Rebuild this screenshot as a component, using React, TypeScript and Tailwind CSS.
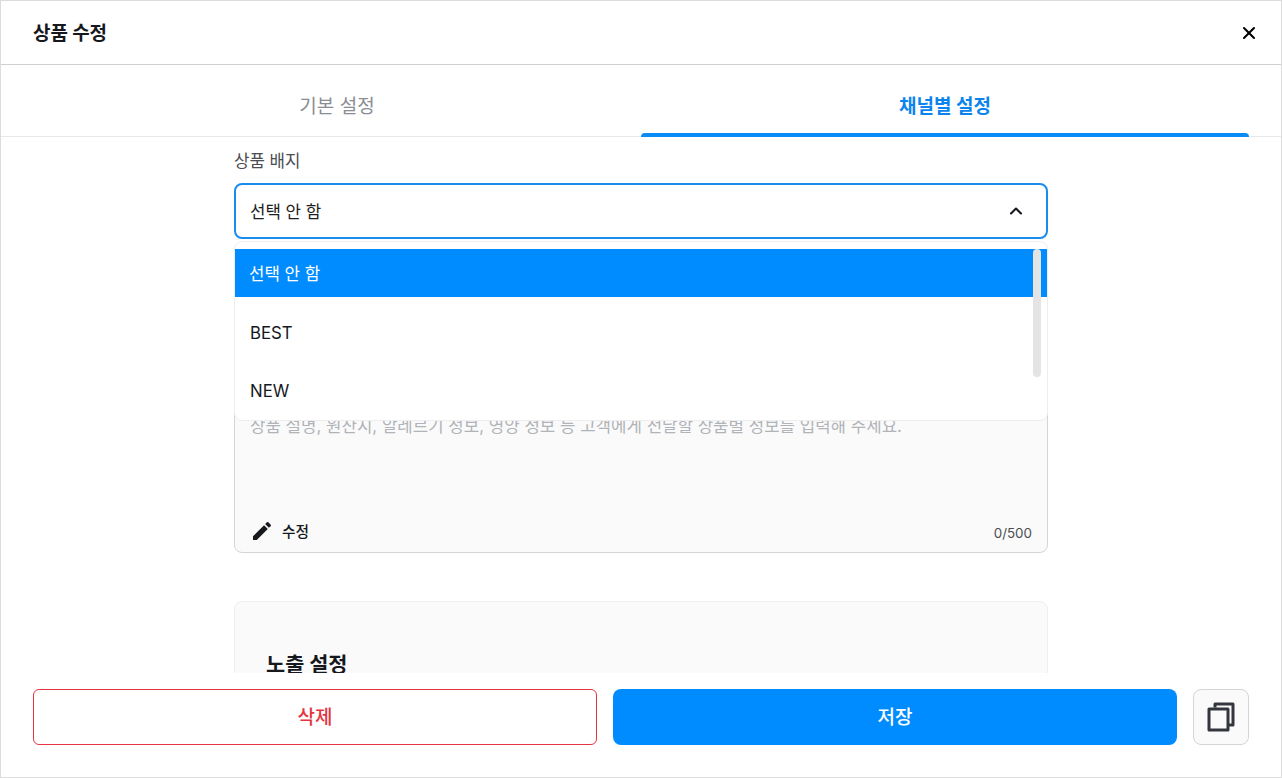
import React from 'react';
import { X, ChevronUp } from 'lucide-react';

const font = "font-['Inter','Noto_Sans_CJK_KR',sans-serif]";

const App = () => {
  return (
    <div className={`w-[1282px] h-[778px] flex flex-col bg-white border border-[#dcdcdc] overflow-hidden ${font}`}>
      {/* header */}
      <div className="h-[64px] shrink-0 flex items-center justify-between pl-[32px] pr-[22px] border-b border-[#cfcfcf]">
        <h1 className="pt-[3px] text-[19px] font-bold text-[#16181d] tracking-[-0.1px]">상품 수정</h1>
        <X size={20} strokeWidth={2.5} className="text-black" />
      </div>

      {/* tabs */}
      <div className="h-[72px] shrink-0 flex pr-[32px] border-b border-[#e8e8e8]">
        <div className="flex-1 flex items-center justify-center pl-[32px] pt-[14px] text-[19px] text-[#8a8d93]">기본 설정</div>
        <div className="w-[608px] relative flex items-center justify-center pt-[14px] text-[19px] font-bold text-[#0b84ee]">
          채널별 설정
          <div className="absolute left-0 right-0 bottom-[-1px] h-[4px] bg-[#0b8bf5] rounded-t-[4px]" />
        </div>
      </div>

      {/* scrolling body */}
      <div className="flex-1 min-h-0 overflow-hidden">
        <div className="w-[814px] ml-[233px] pt-[14px]">
          <label className="block text-[16.8px] leading-[20px] text-[#4a4d52]">상품 배지</label>
          <div className="relative mt-[12px]">
            <div className="h-[56px] flex items-center justify-between pl-[14px] pr-[20px] border-2 border-[#1a8cee] rounded-[8px] bg-white">
              <span className="pt-[3px] text-[16.8px] text-[#1c1e22]">선택 안 함</span>
              <ChevronUp size={20} strokeWidth={2.5} className="text-[#16181d]" />
            </div>
            <div className="absolute z-10 left-0 right-0 top-[58px] h-[180px] pt-[7px] bg-white border border-[#eeeeee] rounded-[8px] overflow-hidden">
              <div className="h-[48px] -mx-px flex items-center pl-[15px] pt-[3px] bg-[#008cff] text-[16.8px] text-white">선택 안 함</div>
              <div className="h-[48px] mt-[11px] flex items-center pl-[15px] pt-[3px] text-[16.8px] text-[#16181d]">BEST</div>
              <div className="h-[48px] mt-[10px] flex items-center pl-[15px] pt-[3px] text-[16.8px] text-[#16181d]">NEW</div>
              <div className="absolute top-[7px] right-[6px] w-[8px] h-[128px] rounded-full bg-[#e4e4e4]" />
            </div>
          </div>

          <div className="mt-[158px] h-[156px] flex flex-col justify-between px-[15px] pt-[18px] pb-[9px] border border-[#d5d5d5] rounded-[8px] bg-[#fafafa]">
            <p className="text-[16.8px] leading-[20px] text-[#b0b3b8]">
              상품 설명, 원산지, 알레르기 정보, 영양 정보 등 고객에게 전달할 상품별 정보를 입력해 주세요.
            </p>
            <div className="flex items-end justify-between">
              <div className="flex items-center gap-[8px]">
                <svg width="24" height="24" viewBox="0 0 24 24" className="text-[#16181d]">
                  <path fill="currentColor" d="M3 17.25V21h3.75L17.81 9.94l-3.75-3.75L3 17.25zM20.71 7.04a1 1 0 0 0 0-1.41l-2.34-2.34a1 1 0 0 0-1.41 0l-1.83 1.83 3.75 3.75 1.83-1.83z" />
                </svg>
                <span className="pt-[2px] text-[14.7px] font-medium text-[#16181d]">수정</span>
              </div>
              <span className="text-[13.4px] text-[#4a4d52]">0/500</span>
            </div>
          </div>

          <div className="mt-[48px] px-[31px] pt-[48px] pb-[40px] border border-[#eeeeee] rounded-[8px] bg-[#fafafa]">
            <h2 className="text-[20.8px] leading-[30px] font-bold text-[#16181d]">노출 설정</h2>
          </div>
        </div>
      </div>

      {/* footer */}
      <div className="h-[104px] shrink-0 flex gap-[16px] px-[32px] pt-[16px] bg-white">
        <button className="w-[564px] h-[56px] pt-[3px] rounded-[6px] border border-[#e5343f] text-[19px] font-medium text-[#e5343f] bg-white">삭제</button>
        <button className="w-[564px] h-[56px] pt-[3px] rounded-[8px] bg-[#008cff] text-[19px] font-medium text-white">저장</button>
        <button className="w-[56px] h-[56px] flex items-center justify-center rounded-[8px] border border-[#d5d5d5] bg-[#fafafa]">
          <svg width="28" height="30" viewBox="0 0 28 30" fill="none" stroke="#33363d" strokeWidth="3" strokeLinejoin="round">
            <path d="M8 5.5V2h18v21h-5" />
            <rect x="2" y="7" width="19" height="21" />
          </svg>
        </button>
      </div>
    </div>
  );
};

export default App;
